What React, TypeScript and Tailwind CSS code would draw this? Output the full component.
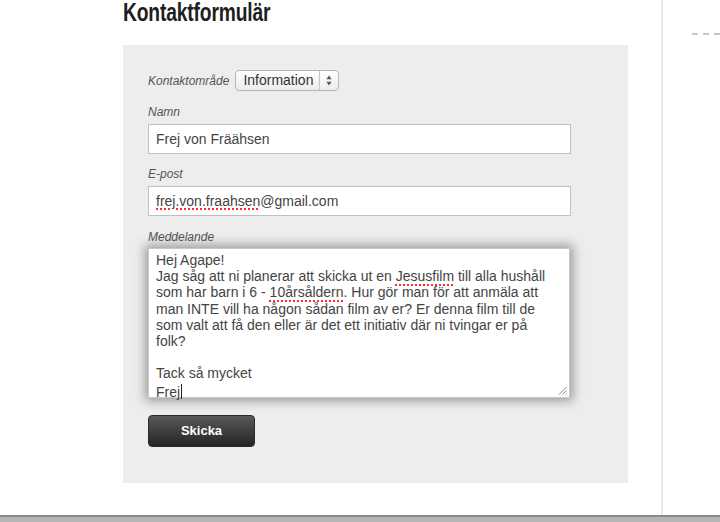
const Spell = ({ children }: { children: React.ReactNode }) => (
  <span className="underline decoration-red-500 decoration-dotted decoration-[1.5px] underline-offset-[3px]">
    {children}
  </span>
);

const Label = ({ children }: { children: React.ReactNode }) => (
  <div className="text-[12px] italic leading-[14px] text-[#555]">{children}</div>
);

export default function App() {
  return (
    <div className="relative flex h-[522px] w-[720px] flex-col overflow-hidden bg-white font-['Liberation_Sans',Arial,sans-serif]">
      <div className="flex flex-1">
        <div className="w-[123px] shrink-0" />
        <div className="w-[505px] shrink-0">
          <h1 className="w-[194px] origin-left scale-x-[0.77] text-[25px] font-bold leading-[25px] tracking-[-0.2px] text-[#1e1e1e]">
            Kontaktformulär
          </h1>
          <div className="mt-[20px] h-[438px] bg-[#ededed] px-[25px] pt-[25px]">
            <div className="flex items-center gap-[6px]">
              <Label>Kontaktområde</Label>
              <div className="flex h-[21px] w-[104px] items-center rounded-[4px] border border-[#b5b5b5] bg-gradient-to-b from-white to-[#ececec] text-[14px] text-[#333]">
                <span className="flex-1 pl-[7px] leading-[19px]">Information</span>
                <span className="flex h-full w-[19px] items-center justify-center border-l border-[#c5c5c5]">
                  <svg width="6" height="11" viewBox="0 0 6 11">
                    <path d="M3 0.5 L5.6 4.2 H0.4 Z" fill="#555" />
                    <path d="M3 10.5 L5.6 6.8 H0.4 Z" fill="#555" />
                  </svg>
                </span>
              </div>
            </div>

            <div className="mt-[14px]">
              <Label>Namn</Label>
            </div>
            <div className="mt-[5px] flex h-[30px] w-[423px] items-center border border-[#c0c0c0] bg-white pl-[7px] text-[14px] text-[#444]">
              Frej von Fräähsen
            </div>

            <div className="mt-[13px]">
              <Label>E-post</Label>
            </div>
            <div className="mt-[5px] flex h-[30px] w-[423px] items-center border border-[#c0c0c0] bg-white pl-[7px] text-[14px] text-[#444]">
              <Spell>frej.von.fraahsen</Spell>@gmail.com
            </div>

            <div className="mt-[14px]">
              <Label>Meddelande</Label>
            </div>
            <div className="relative mt-[4px] h-[150px] w-[422px] whitespace-nowrap border border-[#c8c8c8] bg-white pl-[7px] pt-[3px] text-[14px] leading-[16.2px] text-[#444] shadow-[0_0_10px_3px_rgba(0,0,0,0.35)]">
              Hej Agape!
              <br />
              Jag såg att ni planerar att skicka ut en <Spell>Jesusfilm</Spell> till alla hushåll
              <br />
              som har barn i 6 - <Spell>10årsåldern</Spell>. Hur gör man för att anmäla att
              <br />
              man INTE vill ha någon sådan film av er? Er denna film till de
              <br />
              som valt att få den eller är det ett initiativ där ni tvingar er på
              <br />
              folk?
              <br />
              <br />
              Tack så mycket
              <br />
              Frej<span className="ml-[1px] inline-block h-[15px] w-[1px] translate-y-[2px] bg-[#222]" />
              <svg className="absolute bottom-[2px] right-[2px]" width="9" height="9" viewBox="0 0 9 9">
                <path d="M8.5 1 L1 8.5 M8.5 4.5 L4.5 8.5 M8.5 7.5 L7.5 8.5" stroke="#888" strokeWidth="1" />
              </svg>
            </div>

            <button className="mt-[17px] flex h-[32px] w-[107px] items-center justify-center rounded-[4px] border border-[#2a2a2a] bg-gradient-to-b from-[#5a5a5a] to-[#252525] text-[13px] font-bold text-white">
              Skicka
            </button>
          </div>
        </div>
        <div className="w-[33px] shrink-0" />
        <div className="w-[2px] shrink-0 bg-[#ebebeb]" />
        <div className="flex-1 pl-[29px] pt-[33px]">
          <div className="h-0 border-t-2 border-dashed border-[#c8c8c8]" />
        </div>
      </div>
      <div className="h-[7px] border-t-2 border-[#8a8a8a] bg-[#b5b5b5]" />
    </div>
  );
}
